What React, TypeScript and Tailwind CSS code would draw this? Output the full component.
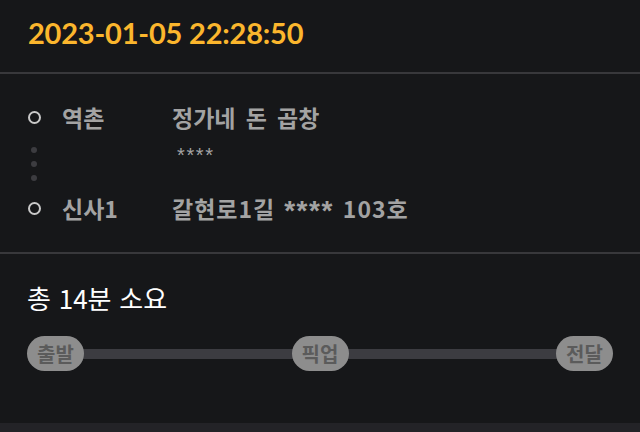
const KR = "font-['Noto_Sans_CJK_KR','Noto_Sans',sans-serif]"
const STAR = "font-['Liberation_Sans',Arial,sans-serif]"

function RingDot() {
  return <span className="block w-[13px] h-[13px] rounded-full border-[2.5px] border-[#c9c9c9]" />
}

function Stop({ label }: { label: string }) {
  return (
    <span className="relative z-10 flex items-center justify-center w-[57px] h-[35px] rounded-full bg-[#8d8d8d] text-[20px] font-bold text-[#5b5b5b] leading-none">
      {label}
    </span>
  )
}

export default function App() {
  return (
    <div className={`w-[640px] h-[432px] bg-[#161719] flex flex-col ${KR}`}>
      <div className="h-[72px] flex items-center px-[28px] pb-[6px]">
        <h1 className="font-['Lato',sans-serif] text-[29px] font-bold text-[#fbb62d] tracking-[-0.2px]">2023-01-05 22:28:50</h1>
      </div>
      <div className="h-[2px] bg-[#38383b]" />

      <div className="px-[26px] pt-[29px] pb-[30px]">
        <div className="grid grid-cols-[16px_90px_1fr] gap-x-[20px] text-[#a3a3a3]">
          <div className="h-[28px] flex items-center justify-center"><RingDot /></div>
          <div className="h-[28px] flex items-center text-[23px] font-bold">역촌</div>
          <div className="h-[28px] flex items-center text-[23px] font-bold [word-spacing:5px]">정가네 돈 곱창</div>

          <div className="h-[63px] flex flex-col items-center gap-[8px] pt-[16px]">
            <span className="block w-[6px] h-[6px] rounded-full bg-[#3c3c40]" />
            <span className="block w-[6px] h-[6px] rounded-full bg-[#3c3c40]" />
            <span className="block w-[6px] h-[6px] rounded-full bg-[#3c3c40]" />
          </div>
          <div />
          <div className={`h-[63px] pt-[14px] pl-[5px] text-[20px] leading-[20px] tracking-[1.6px] ${STAR}`}>****</div>

          <div className="h-[28px] flex items-center justify-center"><RingDot /></div>
          <div className="h-[28px] flex items-center text-[23px] font-bold">신사1</div>
          <div className="h-[28px] flex items-center gap-[9px] text-[23px] font-bold">
            <span className="tracking-[1px]">갈현로1길</span>
            <span className={`${STAR} text-[28px] leading-none tracking-[1.5px] pt-[6px]`}>****</span>
            <span className="tracking-[1px]">103호</span>
          </div>
        </div>
      </div>
      <div className="h-[2px] bg-[#38383b]" />

      <div className="flex-1 px-[27px] pt-[28px]">
        <p className="text-[26px] text-white leading-[32px] [word-spacing:2px]">총 14분 소요</p>
        <div className="relative mt-[22px] flex items-center justify-between">
          <div className="absolute left-[30px] right-[30px] top-1/2 -translate-y-1/2 h-[10px] bg-[#3c3c41]" />
          <Stop label="출발" />
          <Stop label="픽업" />
          <Stop label="전달" />
        </div>
      </div>
      <div className="h-[9px] bg-[#232327]" />
    </div>
  )
}
